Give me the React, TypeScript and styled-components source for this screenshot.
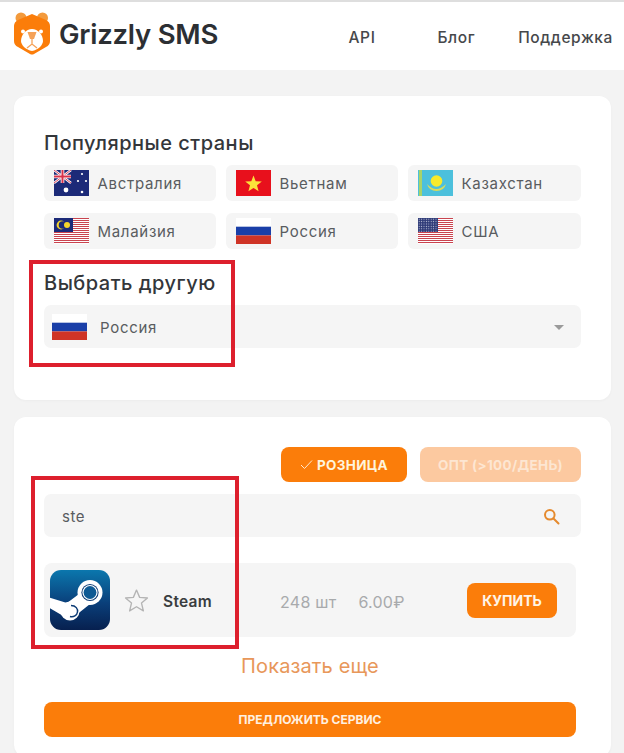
import React from "react";
import styled, { createGlobalStyle } from "styled-components";

const Global = createGlobalStyle`
  html, body { margin: 0; padding: 0; background: #f3f3f3; }
  body { font-family: Inter, "Noto Sans", "Liberation Sans", sans-serif; color: #333; }
  * { box-sizing: border-box; }
`;

const Page = styled.div`
  width: 624px;
  height: 753px;
  overflow: hidden;
  background: #f3f3f3;
  display: flex;
  flex-direction: column;
`;

const Header = styled.header`
  height: 70px;
  flex: none;
  background: #fff;
  border-top: 2px solid #dedede;
  display: flex;
  align-items: center;
  padding: 0 11px 2px 13px;
`;

const Brand = styled.div`
  display: flex;
  align-items: center;
  gap: 8px;
  font-size: 27.5px;
  font-weight: 600;
  letter-spacing: -0.25px;
  color: #2c2f33;
  margin-top: -3px;
`;

const LogoBox = styled.span`
  display: flex;
  margin-top: -2px;
`;

const Nav = styled.nav`
  margin-left: auto;
  display: flex;
  font-size: 15.5px;
  letter-spacing: 0.6px;
  font-weight: 500;
  color: #46484b;
  margin-top: 4px;
`;

const NavLink = styled.span<{ $ml: number }>`
  margin-left: ${(p) => p.$ml}px;
`;

const Card = styled.section<{ $h: number; $mt: number }>`
  position: relative;
  flex: none;
  margin: ${(p) => p.$mt}px 13px 0 14px;
  height: ${(p) => p.$h}px;
  background: #fff;
  border-radius: 12px;
  box-shadow: 0 1px 3px rgba(0, 0, 0, 0.03);
  padding: 0 30px;
`;

const Title = styled.h2<{ $mt: number }>`
  margin: ${(p) => p.$mt}px 0 0;
  font-size: 20px;
  letter-spacing: 0.5px;
  line-height: 24px;
  font-weight: 500;
  color: #33363a;
`;

const ChipGrid = styled.div`
  display: grid;
  grid-template-columns: 172px 172px 173px;
  grid-auto-rows: 36px;
  gap: 12px 10px;
  margin-top: 10px;
`;

const Chip = styled.div`
  background: #f5f5f5;
  border-radius: 6px;
  display: flex;
  align-items: center;
  padding-left: 10px;
  gap: 8.5px;
  font-size: 15px;
  letter-spacing: 0.7px;
  color: #595c60;
`;

const Select = styled.div`
  margin-top: 10px;
  height: 43px;
  background: #f5f5f5;
  border-radius: 7px;
  display: flex;
  align-items: center;
  padding: 1px 17px 0 8px;
  gap: 13px;
  font-size: 15px;
  letter-spacing: 0.7px;
  color: #595c60;
`;

const Caret = styled.span`
  margin-left: auto;
  width: 0;
  height: 0;
  border-left: 5.5px solid transparent;
  border-right: 5.5px solid transparent;
  border-top: 5.5px solid #9a9a9a;
`;

const Highlight = styled.div<{ $l: number; $t: number; $w: number; $h: number }>`
  position: absolute;
  left: ${(p) => p.$l}px;
  top: ${(p) => p.$t}px;
  width: ${(p) => p.$w}px;
  height: ${(p) => p.$h}px;
  border: 4px solid #dd1f2d;
  pointer-events: none;
`;

const Modes = styled.div`
  display: flex;
  justify-content: flex-end;
  gap: 13px;
  padding-top: 30px;
`;

const ModeButton = styled.div<{ $active?: boolean; $w: number }>`
  width: ${(p) => p.$w}px;
  height: 35px;
  border-radius: 8px;
  background: ${(p) => (p.$active ? "#fb7d0a" : "#fcc9a0")};
  color: ${(p) => (p.$active ? "#fff4dc" : "#fde6d2")};
  font-size: 13.5px;
  letter-spacing: 0.32px;
  font-weight: 700;
  display: flex;
  align-items: center;
  justify-content: center;
  gap: 4px;
`;

const Search = styled.div`
  margin-top: 12px;
  height: 43px;
  background: #f5f5f5;
  border-radius: 7px;
  display: flex;
  align-items: center;
  justify-content: space-between;
  padding: 2px 21px 0 18px;
  font-size: 15px;
  letter-spacing: 0.5px;
  color: #595c60;
`;

const ServiceRow = styled.div`
  margin-top: 26px;
  width: 532px;
  height: 74px;
  background: #f5f5f5;
  border-radius: 8px;
  display: flex;
  align-items: center;
  padding: 0 19px 0 6px;
`;

const StarWrap = styled.span`
  display: flex;
  margin-left: 14px;
`;

const ServiceName = styled.span`
  margin-left: 14px;
  font-size: 15.5px;
  letter-spacing: 0.3px;
  font-weight: 600;
  color: #3a3d40;
  padding-top: 3px;
`;

const Meta = styled.span<{ $ml: number }>`
  margin-left: ${(p) => p.$ml}px;
  font-size: 16px;
  letter-spacing: 0.25px;
  color: #a8aaac;
  padding-top: 3px;
`;

const Buy = styled.div`
  margin-left: auto;
  width: 90px;
  height: 35px;
  border-radius: 8px;
  background: #fb7d0a;
  color: #fff4e6;
  font-size: 14px;
  font-weight: 700;
  display: flex;
  align-items: center;
  justify-content: center;
`;

const More = styled.div`
  margin-top: 15px;
  text-align: center;
  font-size: 20px;
  letter-spacing: 0.12px;
  line-height: 28px;
  color: #e8975a;
  padding-right: 5px;
`;

const Propose = styled.div`
  margin-top: 22px;
  width: 532px;
  height: 35px;
  border-radius: 8px;
  background: #fb7d0a;
  color: #fff0e0;
  font-size: 12px;
  font-weight: 700;
  display: flex;
  align-items: center;
  justify-content: center;
`;

const Logo = () => (
  <svg width="38" height="44" viewBox="0 0 38 44">
    <circle cx="8" cy="7" r="5.5" fill="#f39a3c" />
    <circle cx="29.5" cy="7" r="5.5" fill="#f39a3c" />
    <path d="M19 3 L33 9 Q37 11 37 15 L37 30 Q37 34 33 36 L21 43 Q19 44 17 43 L5 36 Q1 34 1 30 L1 15 Q1 11 5 9 Z" fill="#fb7d0a" />
    <circle cx="10" cy="20.5" r="2" fill="#fff" />
    <circle cx="28" cy="20.5" r="2" fill="#fff" />
    <path d="M19 18 C13 18 8 24 8 30 C8 34 13 39 19 40 C25 39 30 34 30 30 C30 24 25 18 19 18 Z" fill="#fff" />
    <path d="M14.5 21 H23.5 L21 28 H17 Z" fill="#f5a258" />
    <path d="M19 28 V33 M14 37 L19 33 L24 37" stroke="#f5a258" strokeWidth="1.3" fill="none" />
  </svg>
);

const Flag = ({ children }: { children: React.ReactNode }) => (
  <svg width={35} height={26} viewBox="0 0 35 26" style={{ flex: "none" }}>
    {children}
  </svg>
);

const Australia = () => (
  <Flag>
    <rect width="35" height="26" fill="#1c2a78" />
    <path d="M0 0 L17 13 M17 0 L0 13" stroke="#fff" strokeWidth="2.4" />
    <path d="M0 0 L17 13 M17 0 L0 13" stroke="#d8314a" strokeWidth="0.9" />
    <path d="M8.5 0 V13 M0 6.5 H17" stroke="#fff" strokeWidth="3.6" />
    <path d="M8.5 0 V13 M0 6.5 H17" stroke="#d8314a" strokeWidth="2" />
    <circle cx="12" cy="20" r="2.4" fill="#fff" />
    <circle cx="28" cy="4" r="1.1" fill="#fff" />
    <circle cx="24" cy="11" r="1.1" fill="#fff" />
    <circle cx="32" cy="11" r="1.1" fill="#fff" />
    <circle cx="28" cy="22" r="1.3" fill="#fff" />
  </Flag>
);

const Vietnam = () => (
  <Flag>
    <rect width="35" height="26" fill="#e8101c" />
    <path d="M17.5 5.5 L19.7 11.2 L25.8 11.5 L21 15.3 L22.6 21.2 L17.5 17.9 L12.4 21.2 L14 15.3 L9.2 11.5 L15.3 11.2 Z" fill="#fbe23a" />
  </Flag>
);

const Kazakhstan = () => (
  <Flag>
    <rect width="35" height="26" fill="#4cc0dc" />
    <rect x="1" width="3" height="26" fill="#a8d36a" />
    <circle cx="18.5" cy="11" r="5.8" fill="#f7ea2a" />
    <path d="M9 14 Q18 24 28 14 Q26 21 18.5 21 Q11 21 9 14 Z" fill="#d9dc5a" />
  </Flag>
);

const Stripes = () => (
  <>
    {Array.from({ length: 13 }, (_, i) => (
      <rect key={i} y={i * 2} width="35" height="1" fill="#c9444f" />
    ))}
  </>
);

const Malaysia = () => (
  <Flag>
    <rect width="35" height="26" fill="#fff" />
    <Stripes />
    <rect width="19" height="14" fill="#1c2a78" />
    <circle cx="7" cy="7" r="4.4" fill="#f5d52c" />
    <circle cx="8.5" cy="7" r="3.8" fill="#1c2a78" />
    <circle cx="13" cy="7" r="3" fill="#f5d52c" />
  </Flag>
);

const Usa = () => (
  <Flag>
    <rect width="35" height="26" fill="#fff" />
    <Stripes />
    <rect width="20" height="14" fill="#2f3b78" />
    <pattern id="usa-stars" width="2.4" height="2.4" patternUnits="userSpaceOnUse">
      <circle cx="1.2" cy="1.2" r="0.55" fill="#c8cce0" />
    </pattern>
    <rect width="20" height="14" fill="url(#usa-stars)" />
  </Flag>
);

const Russia = () => (
  <Flag>
    <rect width="35" height="8.7" fill="#fff" />
    <rect y="8.7" width="35" height="8.7" fill="#1a3fa8" />
    <rect y="17.4" width="35" height="8.6" fill="#cf3426" />
  </Flag>
);

const SteamIcon = () => (
  <svg width="60" height="60" viewBox="0 0 60 60" style={{ flex: "none" }}>
    <defs>
      <linearGradient id="steam-bg" x1="0" y1="0" x2="0" y2="1">
        <stop offset="0" stopColor="#0b77ad" />
        <stop offset="0.55" stopColor="#0a3f7a" />
        <stop offset="1" stopColor="#07204f" />
      </linearGradient>
      <clipPath id="steam-clip">
        <rect width="60" height="60" rx="11" />
      </clipPath>
    </defs>
    <g clipPath="url(#steam-clip)">
      <rect width="60" height="60" fill="url(#steam-bg)" />
      <path d="M-2 27 L17 33 L29 24 L40 34 L30 42 L20 50 L-2 37 Z" fill="#fff" />
      <circle cx="40" cy="22.5" r="12.5" fill="#fff" />
      <circle cx="20" cy="41" r="9.5" fill="#fff" />
      <circle cx="40" cy="22.5" r="8.6" fill="#0d3c76" />
      <circle cx="40" cy="22.5" r="7.6" fill="#fff" />
      <circle cx="40" cy="22.5" r="6.4" fill="#0e5a94" />
      <path d="M21 35.5 C26 35.5 28 39 27.5 42 C27 45.5 23.5 47.5 20 46.5" fill="none" stroke="#0d3c76" strokeWidth="1.5" />
    </g>
  </svg>
);

const Star = () => (
  <svg width="25" height="25" viewBox="0 0 24 24" fill="none" stroke="#b4b4b4" strokeWidth="1.3" strokeLinejoin="round">
    <path d="M12 2 L15 9 L22.5 9.6 L16.8 14.5 L18.6 22 L12 18 L5.4 22 L7.2 14.5 L1.5 9.6 L9 9 Z" />
  </svg>
);

const Check = () => (
  <svg width="13" height="11" viewBox="0 0 13 11" fill="none" stroke="#ffe9cf" strokeWidth="1">
    <path d="M1 6 L4.5 9.5 L12 1.5" />
  </svg>
);

const SearchIcon = () => (
  <svg width="17" height="17" viewBox="0 0 17 17" fill="none" stroke="#e58a2e" strokeWidth="2">
    <circle cx="6.8" cy="6.8" r="4.8" />
    <path d="M10.5 10.5 L15.5 15.5" strokeLinecap="round" />
  </svg>
);

const countries: [string, React.FC][] = [
  ["Австралия", Australia],
  ["Вьетнам", Vietnam],
  ["Казахстан", Kazakhstan],
  ["Малайзия", Malaysia],
  ["Россия", Russia],
  ["США", Usa],
];

export default function App() {
  return (
    <Page>
      <Global />
      <Header>
        <Brand>
          <LogoBox>
            <Logo />
          </LogoBox>
          Grizzly SMS
        </Brand>
        <Nav>
          <NavLink $ml={0}>API</NavLink>
          <NavLink $ml={62}>Блог</NavLink>
          <NavLink $ml={43}>Поддержка</NavLink>
        </Nav>
      </Header>
      <Card $h={304} $mt={26}>
        <Title $mt={35}>Популярные страны</Title>
        <ChipGrid>
          {countries.map(([name, F]) => (
            <Chip key={name}>
              <F />
              {name}
            </Chip>
          ))}
        </ChipGrid>
        <Title $mt={22}>Выбрать другую</Title>
        <Select>
          <Russia />
          Россия
          <Caret />
        </Select>
        <Highlight $l={15} $t={164} $w={206} $h={107} />
      </Card>
      <Card $h={340} $mt={17}>
        <Modes>
          <ModeButton $active $w={126}>
            <Check />
            РОЗНИЦА
          </ModeButton>
          <ModeButton $w={161}>ОПТ (&gt;100/ДЕНЬ)</ModeButton>
        </Modes>
        <Search>
          ste
          <SearchIcon />
        </Search>
        <ServiceRow>
          <SteamIcon />
          <StarWrap>
            <Star />
          </StarWrap>
          <ServiceName>Steam</ServiceName>
          <Meta $ml={68}>248 шт</Meta>
          <Meta $ml={22}>6.00₽</Meta>
          <Buy>КУПИТЬ</Buy>
        </ServiceRow>
        <More>Показать еще</More>
        <Propose>ПРЕДЛОЖИТЬ СЕРВИС</Propose>
        <Highlight $l={17} $t={59} $w={208} $h={173} />
      </Card>
    </Page>
  );
}
